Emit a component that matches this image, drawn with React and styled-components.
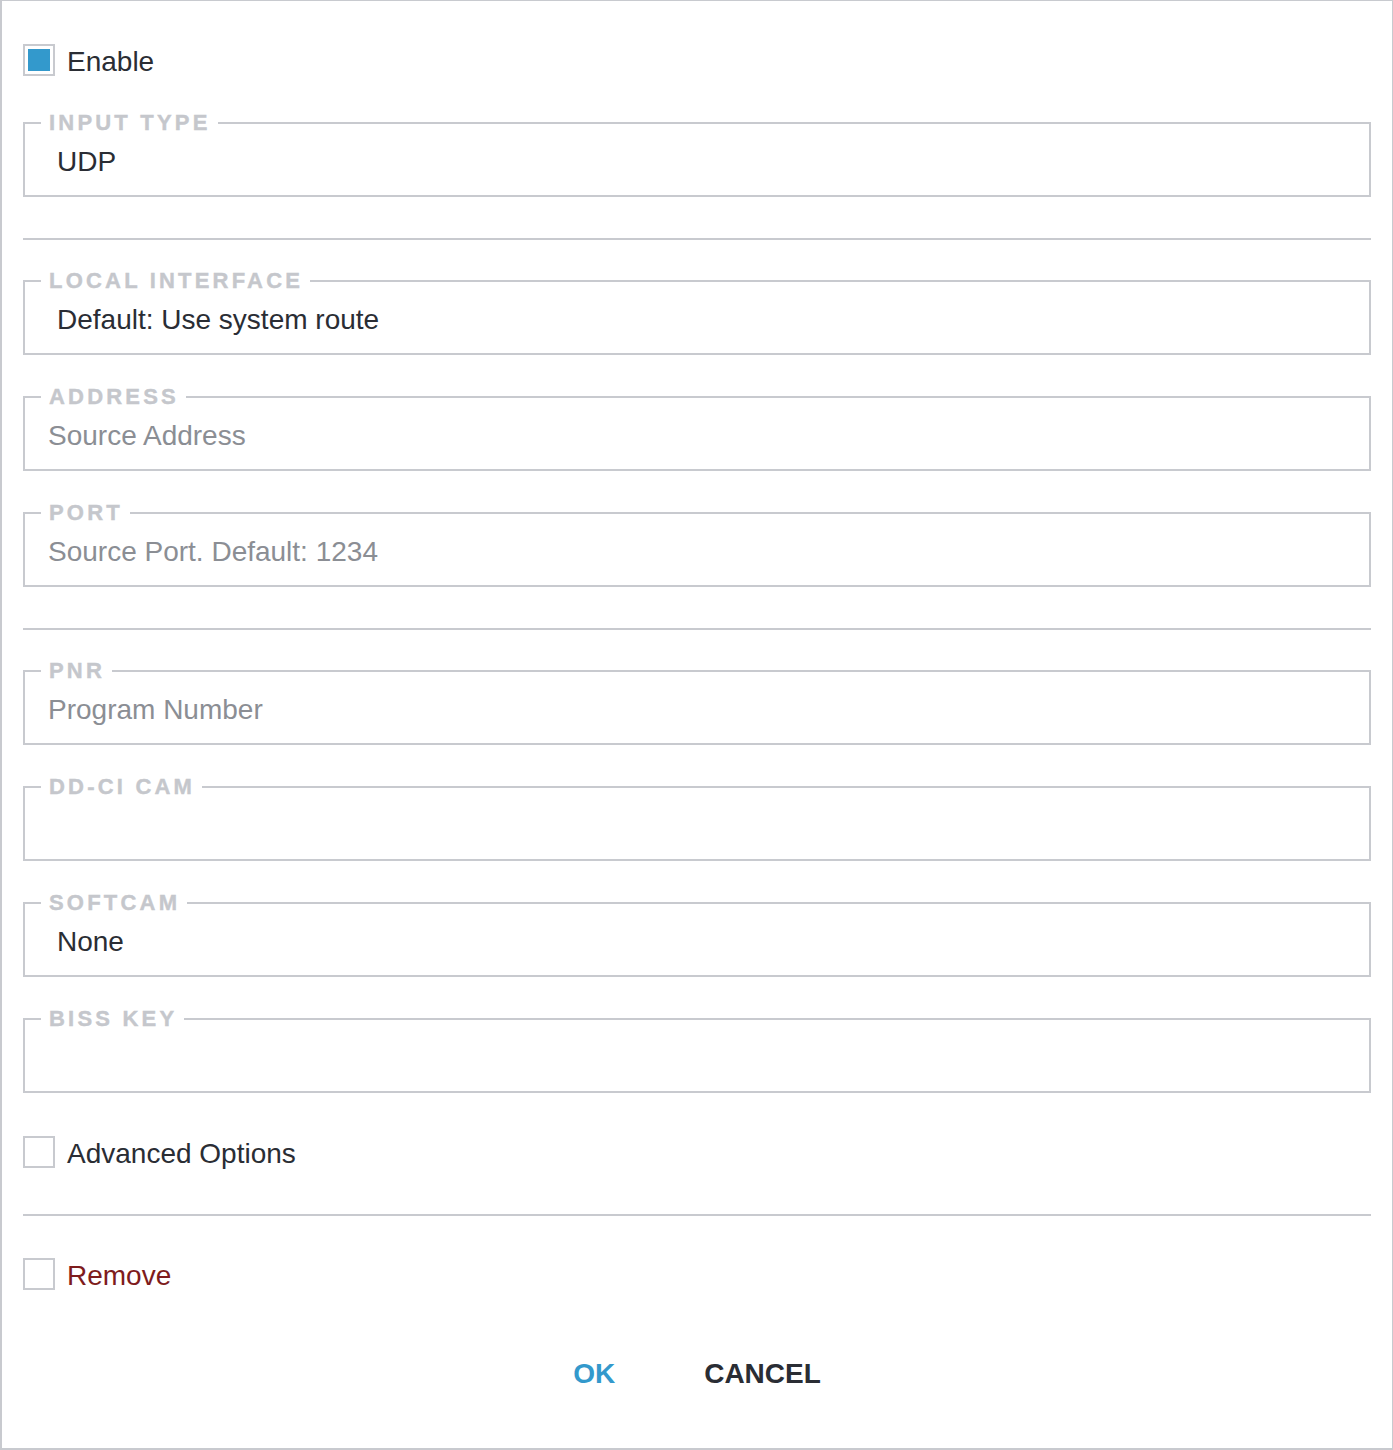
import React from "react";
import styled, { createGlobalStyle } from "styled-components";

const GlobalStyle = createGlobalStyle`
  html, body { margin: 0; padding: 0; background: #ffffff; }
  body { font-family: "Liberation Sans", Arial, Helvetica, sans-serif; }
  * { box-sizing: border-box; }
`;

const Dialog = styled.div`
  width: 1393px;
  height: 1450px;
  background: #ffffff;
  border-style: solid;
  border-color: #c8cacf;
  border-width: 1px 1px 2px 2px;
  padding: 43px 21px 0 21px;
  display: flex;
  flex-direction: column;
  font-family: "Liberation Sans", Arial, Helvetica, sans-serif;
  color: #2a2d34;
`;

const CheckRow = styled.label`
  display: flex;
  align-items: center;
  height: 32px;
  gap: 12px;
  margin-top: ${(p) => p.$mt || 0}px;
  margin-bottom: ${(p) => p.$mb || 0}px;
  cursor: pointer;
`;

const Box = styled.span`
  width: 32px;
  height: 32px;
  border: 2px solid #c8cacf;
  padding: 3px;
  flex: none;
  display: flex;
`;

const BoxFill = styled.span`
  flex: 1;
  background: #3399cc;
`;

const CheckText = styled.span`
  font-size: 28px;
  line-height: 32px;
  padding-top: 4px;
  color: ${(p) => (p.$danger ? "#7e1c1c" : "#2a2d34")};
`;

const Field = styled.fieldset`
  margin: 0 0 ${(p) => p.$mb ?? 29}px 0;
  padding: 0 16px;
  border: 2px solid #c8cacf;
  min-width: 0;
`;

const Legend = styled.legend`
  padding: 0 7px 0 8px;
  font-size: 22px;
  line-height: 26px;
  font-weight: 700;
  letter-spacing: 3.2px;
  text-transform: uppercase;
  color: #c5c7cc;
  -webkit-text-stroke: 0.4px #c5c7cc;
`;

const SelectValue = styled.div`
  height: 48px;
  line-height: 48px;
  margin: 2px 0 9px 0;
  padding-left: 16px;
  font-size: 28px;
  color: #2a2d34;
  white-space: nowrap;
`;

const TextInput = styled.input`
  display: block;
  width: 100%;
  height: 48px;
  line-height: 48px;
  margin: 2px 0 9px 0;
  padding: 0 0 0 7px;
  border: none;
  outline: none;
  background: transparent;
  font-family: "Liberation Sans", Arial, Helvetica, sans-serif;
  font-size: 28px;
  color: #2a2d34;

  &::placeholder {
    color: #8b8e94;
    opacity: 1;
  }
`;

const Divider = styled.hr`
  border: none;
  height: 2px;
  background: #c8cacf;
  margin: ${(p) => p.$mt}px 0 ${(p) => p.$mb}px 0;
  flex: none;
`;

const Buttons = styled.div`
  display: flex;
  justify-content: center;
  gap: 45px;
  margin-top: 60px;
`;

const Button = styled.button`
  border: none;
  background: transparent;
  padding: 8px 22px;
  font-family: "Liberation Sans", Arial, Helvetica, sans-serif;
  font-size: 28px;
  line-height: 32px;
  font-weight: 700;
  text-transform: uppercase;
  color: ${(p) => (p.$primary ? "#3399cc" : "#2a2d34")};
  cursor: pointer;
`;

function Check({ checked, children, danger, mt, mb }) {
  return (
    <CheckRow $mt={mt} $mb={mb}>
      <Box>{checked && <BoxFill />}</Box>
      <CheckText $danger={danger}>{children}</CheckText>
    </CheckRow>
  );
}

function SelectField({ label, value, mb }) {
  return (
    <Field $mb={mb}>
      <Legend>{label}</Legend>
      <SelectValue>{value}</SelectValue>
    </Field>
  );
}

function InputField({ label, placeholder, mb }) {
  return (
    <Field $mb={mb}>
      <Legend>{label}</Legend>
      <TextInput placeholder={placeholder} />
    </Field>
  );
}

export default function App() {
  return (
    <>
      <GlobalStyle />
      <Dialog>
        <Check checked mb={34}>Enable</Check>
        <SelectField label="Input Type" value="UDP" mb={0} />
        <Divider $mt={41} $mb={28} />
        <SelectField label="Local Interface" value="Default: Use system route" />
        <InputField label="Address" placeholder="Source Address" />
        <InputField label="Port" placeholder="Source Port. Default: 1234" mb={0} />
        <Divider $mt={41} $mb={28} />
        <InputField label="PNR" placeholder="Program Number" />
        <SelectField label="DD-CI CAM" value="" />
        <SelectField label="Softcam" value="None" />
        <InputField label="BISS Key" placeholder="" mb={0} />
        <Check mt={43}>Advanced Options</Check>
        <Divider $mt={46} $mb={42} />
        <Check danger>Remove</Check>
        <Buttons>
          <Button $primary>OK</Button>
          <Button>Cancel</Button>
        </Buttons>
      </Dialog>
    </>
  );
}
